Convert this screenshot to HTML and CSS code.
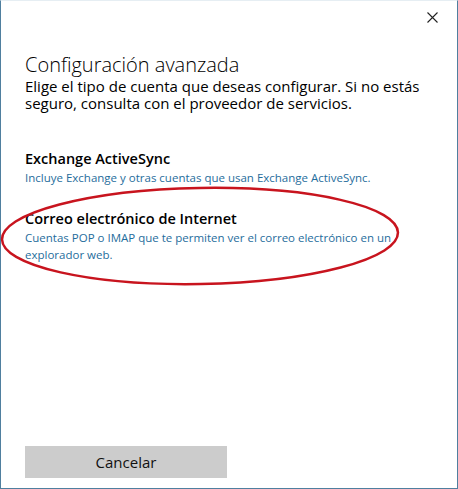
FILE: index.html
```html
<!DOCTYPE html>
<html lang="es">
<head>
  <meta charset="UTF-8" />
  <title>Configuración avanzada</title>
  <link rel="stylesheet" href="styles.css">
</head>
<body>

<div class="window">
  <div class="titlebar">
    <button class="close" aria-label="Cerrar">
      <svg width="11" height="11" viewBox="0 0 11 11"><path d="M0.5 0.5 L10.5 10.5 M10.5 0.5 L0.5 10.5" stroke="#222" stroke-width="1.1" fill="none"/></svg>
    </button>
  </div>

  <div class="content">
    <h1 class="title">Configuración avanzada</h1>
    <p class="intro">Elige el tipo de cuenta que deseas configurar. Si no estás seguro, consulta con el proveedor de servicios.</p>

    <div class="option">
      <h2>Exchange ActiveSync</h2>
      <p>Incluye Exchange y otras cuentas que usan Exchange ActiveSync.</p>
    </div>

    <div class="option highlighted">
      <h2>Correo electrónico de Internet</h2>
      <p>Cuentas POP o IMAP que te permiten ver el correo electrónico en un explorador web.</p>
      <svg class="ring" width="404" height="110" viewBox="0 0 404 110">
        <ellipse cx="202" cy="54" rx="198" ry="48" transform="rotate(-1 202 54)" fill="none" stroke="#c8141e" stroke-width="2.5"/>
      </svg>
    </div>
  </div>

  <div class="footer">
    <button class="btn">Cancelar</button>
  </div>
</div>

</body>
</html>
```

FILE: styles.css
```css
body {
  margin: 0;
  background: #fff;
  font-family: 'Segoe UI', 'Open Sans', sans-serif;
  color: #000;
}

.window {
  box-sizing: border-box;
  height: 489px;
  width: 458px;
  border: 1px solid #4f7f9f;
  border-top-color: #e6eef3;
  display: flex;
  flex-direction: column;
}

.titlebar {
  display: flex;
  justify-content: flex-end;
  height: 32px;
}

.close {
  background: none;
  border: 0;
  width: 46px;
  height: 32px;
  padding: 0;
  display: flex;
  align-items: center;
  justify-content: center;
  margin-right: 2px;
}

.content {
  padding: 0 24px;
  flex: 1;
}

.title {
  font-weight: 300;
  font-size: 20px;
  margin: 19px 0 0;
  line-height: 26px;
}

.intro {
  font-size: 15px;
  line-height: 17px;
  margin: 0;
}

.option {
  position: relative;
}

.option h2 {
  font-size: 14.5px;
  font-weight: 600;
  margin: 0;
  line-height: 21px;
}

.option p {
  font-size: 11.5px;
  color: #1f6d9c;
  margin: 0;
  line-height: 17px;
}

.option:first-of-type {
  margin-top: 36px;
}

.highlighted {
  margin-top: 22px;
  width: 370px;
}

.ring {
  position: absolute;
  left: -27px;
  top: -26px;
}

.footer {
  padding: 0 24px 10px;
}

.btn {
  width: 202px;
  height: 32px;
  background: #cccccc;
  border: 0;
  font-family: inherit;
  font-size: 15px;
  color: #111;
}
```
